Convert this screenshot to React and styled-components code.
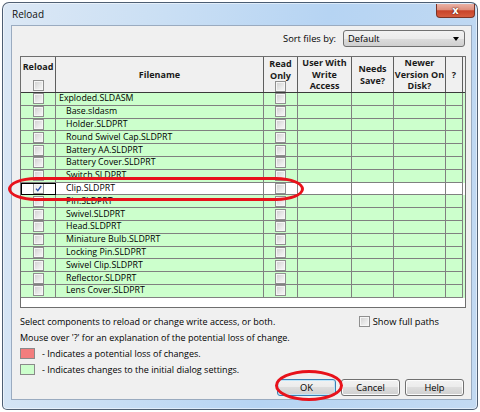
import React from 'react';
import styled, { createGlobalStyle } from 'styled-components';

const FONT = `"Open Sans", "Noto Sans", "DejaVu Sans", sans-serif`;

const Global = createGlobalStyle`
  html, body { margin: 0; padding: 0; background: #ffffff; }
  body { width: 480px; height: 412px; overflow: hidden; font-family: ${FONT}; color: #000; }
  * { box-sizing: border-box; }
`;

const Stage = styled.div`
  position: relative;
  width: 480px;
  height: 412px;
  padding: 2px 2px 0 2px;
`;

const Window = styled.div`
  width: 476px;
  height: 408px;
  border: 1px solid rgba(38, 52, 72, 0.75);
  border-radius: 7px 7px 5px 5px;
  background: linear-gradient(100deg, #dce8f5 0%, #cadff4 30%, #b6d4f3 60%, #c3daf2 100%);
  box-shadow: inset 0 0 0 1px rgba(255, 255, 255, 0.5);
  padding: 0 5px 9px 8px;
  display: flex;
  flex-direction: column;
`;

const TitleBar = styled.div`
  height: 22px;
  display: flex;
  align-items: flex-start;
  justify-content: space-between;
  margin-right: -3px;
`;

const Title = styled.div`
  font-size: 10px;
  line-height: 12px;
  padding: 5px 0 0 1px;
  color: #111;
`;

const CloseButton = styled.div`
  width: 39px;
  height: 14px;
  margin-top: 1px;
  border: 1px solid #7a3326;
  border-top: none;
  border-radius: 0 0 4px 4px;
  background: linear-gradient(#eab1a4 0%, #de8f7d 45%, #c8432a 52%, #d65d3f 100%);
  display: flex;
  align-items: center;
  justify-content: center;
  color: #fff;
  font-family: "DejaVu Sans", sans-serif;
  font-weight: bold;
  font-size: 10px;
  line-height: 10px;
  text-shadow: 0 0 2px #5a1a10, 0 0 1px #5a1a10;
`;

const Client = styled.div`
  flex: 1;
  background: #f0f0f0;
  border: 1px solid #9aabc0;
  padding: 4px 5px 0 8px;
  display: flex;
  flex-direction: column;
`;

const SortRow = styled.div`
  height: 17px;
  margin-bottom: 9px;
  display: flex;
  justify-content: flex-end;
  align-items: center;
  gap: 7px;
  padding-right: 1px;
`;

const Label = styled.span`
  font-size: 9.3px;
  line-height: 12px;
`;

const Dropdown = styled.div`
  width: 122px;
  height: 17px;
  border: 1px solid #707070;
  border-radius: 3px;
  background: linear-gradient(#f2f2f2 0%, #ebebeb 50%, #dddddd 50%, #cfcfcf 100%);
  display: flex;
  align-items: center;
  justify-content: space-between;
  padding: 0 5px 0 4px;
  font-size: 9.3px;
`;

const Arrow = styled.span`
  width: 0;
  height: 0;
  border-left: 3.5px solid transparent;
  border-right: 3.5px solid transparent;
  border-top: 4px solid #000;
`;

const ListBox = styled.div`
  height: 252px;
  border: 1px solid #6e6e6e;
  background: #ffffff;
  overflow: hidden;
`;

const COLS = '35px 208px 34px 54px 42px 52px 17px';

const HeaderRow = styled.div`
  display: grid;
  grid-template-columns: ${COLS};
  height: 36px;
  border-bottom: 1px solid #3a3a3a;
  background: #f0f0f0;
`;

const HeaderCell = styled.div`
  border-right: 1px solid #5e5e5e;
  display: flex;
  flex-direction: column;
  align-items: center;
  justify-content: ${(p) => (p.$top ? 'flex-start' : 'center')};
  padding-top: ${(p) => p.$pad || 0}px;
  font-weight: 700;
  font-size: 9px;
  line-height: 11.5px;
  text-align: center;
  color: #1a1a1a;
  white-space: nowrap;
`;

const Row = styled.div`
  display: grid;
  grid-template-columns: ${COLS};
  height: 12.8px;
  background: ${(p) => (p.$selected ? '#ffffff' : '#ccffcc')};
`;

const Cell = styled.div`
  border-right: 1px solid #808080;
  border-bottom: 1px solid #808080;
  display: flex;
  align-items: center;
  justify-content: ${(p) => (p.$center ? 'center' : 'flex-start')};
  padding-left: ${(p) => p.$indent || 0}px;
  font-size: 8.8px;
  line-height: 11px;
  white-space: nowrap;
  overflow: hidden;
  outline: ${(p) => (p.$focus ? '1px solid #000' : 'none')};
  outline-offset: -1px;
`;

const Box = styled.span`
  display: inline-flex;
  align-items: center;
  justify-content: center;
  width: 11px;
  height: 11px;
  flex: none;
  border: 1px solid #8f8f8f;
  background: ${(p) =>
    p.$checked
      ? 'linear-gradient(135deg, #e4e4e4 0%, #f8f8f8 60%, #ffffff 100%)'
      : 'linear-gradient(135deg, #cfcfcf 0%, #ececec 65%, #f7f7f7 100%)'};
  box-shadow: inset 0 0 0 1px #f6f6f6;
  margin-top: ${(p) => p.$mt || 0}px;
`;

const CheckBox = ({ checked, mt }) => (
  <Box $checked={checked} $mt={mt}>
    {checked && (
      <svg width="7" height="7" viewBox="0 0 7 7">
        <path d="M1 3.6 L2.8 5.6 L6.2 1" fill="none" stroke="#2b4fa8" strokeWidth="1.3" />
      </svg>
    )}
  </Box>
);

const InfoArea = styled.div`
  margin-top: 5px;
  display: grid;
  grid-template-columns: 1fr auto;
  grid-auto-rows: 16px;
  font-size: 9px;
`;

const InfoLine = styled.div`
  display: flex;
  align-items: center;
  gap: 7px;
  white-space: nowrap;
  grid-column: ${(p) => (p.$full ? '1 / span 2' : 'auto')};
`;

const OptionLine = styled.div`
  display: flex;
  align-items: center;
  gap: 3px;
  padding-right: 27px;
  font-size: 9.3px;
`;

const Swatch = styled.span`
  width: 15px;
  height: 11px;
  border: 1px solid #8a8a8a;
  background: ${(p) => p.$color};
`;

const ButtonRow = styled.div`
  margin-top: 2px;
  display: flex;
  justify-content: flex-end;
  gap: 5px;
  padding-right: 2px;
`;

const Button = styled.div`
  width: 59px;
  height: 17px;
  border: 1px solid ${(p) => (p.$default ? '#3c7fb1' : '#707070')};
  border-radius: 3px;
  background: linear-gradient(#f2f2f2 0%, #ebebeb 50%, #dddddd 50%, #cfcfcf 100%);
  box-shadow: ${(p) => (p.$default ? 'inset 0 0 0 1px #bfe6fa' : 'inset 0 0 0 1px #fcfcfc')};
  display: flex;
  align-items: center;
  justify-content: center;
  font-size: 9.3px;
`;

const Mark = styled.div`
  position: absolute;
  left: ${(p) => p.$x}px;
  top: ${(p) => p.$y}px;
  width: ${(p) => p.$w}px;
  height: ${(p) => p.$h}px;
  border: 3px solid #e8121b;
  border-radius: ${(p) => p.$r};
  pointer-events: none;
`;

const files = [
  { name: 'Exploded.SLDASM', root: true },
  { name: 'Base.sldasm' },
  { name: 'Holder.SLDPRT' },
  { name: 'Round Swivel Cap.SLDPRT' },
  { name: 'Battery AA.SLDPRT' },
  { name: 'Battery Cover.SLDPRT' },
  { name: 'Switch.SLDPRT' },
  { name: 'Clip.SLDPRT', selected: true },
  { name: 'Pin.SLDPRT' },
  { name: 'Swivel.SLDPRT' },
  { name: 'Head.SLDPRT' },
  { name: 'Miniature Bulb.SLDPRT' },
  { name: 'Locking Pin.SLDPRT' },
  { name: 'Swivel Clip.SLDPRT' },
  { name: 'Reflector.SLDPRT' },
  { name: 'Lens Cover.SLDPRT' },
];

export default function App() {
  return (
    <Stage>
      <Global />
      <Window>
        <TitleBar>
          <Title>Reload</Title>
          <CloseButton>x</CloseButton>
        </TitleBar>
        <Client>
          <SortRow>
            <Label>Sort files by:</Label>
            <Dropdown>
              <span>Default</span>
              <Arrow />
            </Dropdown>
          </SortRow>
          <ListBox>
            <HeaderRow>
              <HeaderCell $top $pad={4}>
                Reload
                <CheckBox mt={7} />
              </HeaderCell>
              <HeaderCell>Filename</HeaderCell>
              <HeaderCell $top $pad={1}>
                Read
                <br />
                Only
                <CheckBox />
              </HeaderCell>
              <HeaderCell>
                User With
                <br />
                Write
                <br />
                Access
              </HeaderCell>
              <HeaderCell>
                Needs
                <br />
                Save?
              </HeaderCell>
              <HeaderCell>
                Newer
                <br />
                Version On
                <br />
                Disk?
              </HeaderCell>
              <HeaderCell>?</HeaderCell>
            </HeaderRow>
            {files.map((f) => (
              <Row key={f.name} $selected={f.selected}>
                <Cell $center $focus={f.selected}>
                  <CheckBox checked={f.selected} />
                </Cell>
                <Cell $indent={f.root ? 3 : 10}>{f.name}</Cell>
                <Cell $center>
                  <CheckBox />
                </Cell>
                <Cell />
                <Cell />
                <Cell />
                <Cell />
              </Row>
            ))}
          </ListBox>
          <InfoArea>
            <InfoLine>Select components to reload or change write access, or both.</InfoLine>
            <OptionLine>
              <CheckBox />
              <span>Show full paths</span>
            </OptionLine>
            <InfoLine $full>Mouse over '?' for an explanation of the potential loss of change.</InfoLine>
            <InfoLine $full>
              <Swatch $color="#f27d7d" />
              <span>- Indicates a potential loss of changes.</span>
            </InfoLine>
            <InfoLine $full>
              <Swatch $color="#ccffcc" />
              <span>- Indicates changes to the initial dialog settings.</span>
            </InfoLine>
          </InfoArea>
          <ButtonRow>
            <Button $default>OK</Button>
            <Button>Cancel</Button>
            <Button>Help</Button>
          </ButtonRow>
        </Client>
      </Window>
      <Mark $x={8} $y={177} $w={296} $h={24} $r="28px / 12px" />
      <Mark $x={275} $y={370} $w={68} $h={31} $r="50%" />
    </Stage>
  );
}
